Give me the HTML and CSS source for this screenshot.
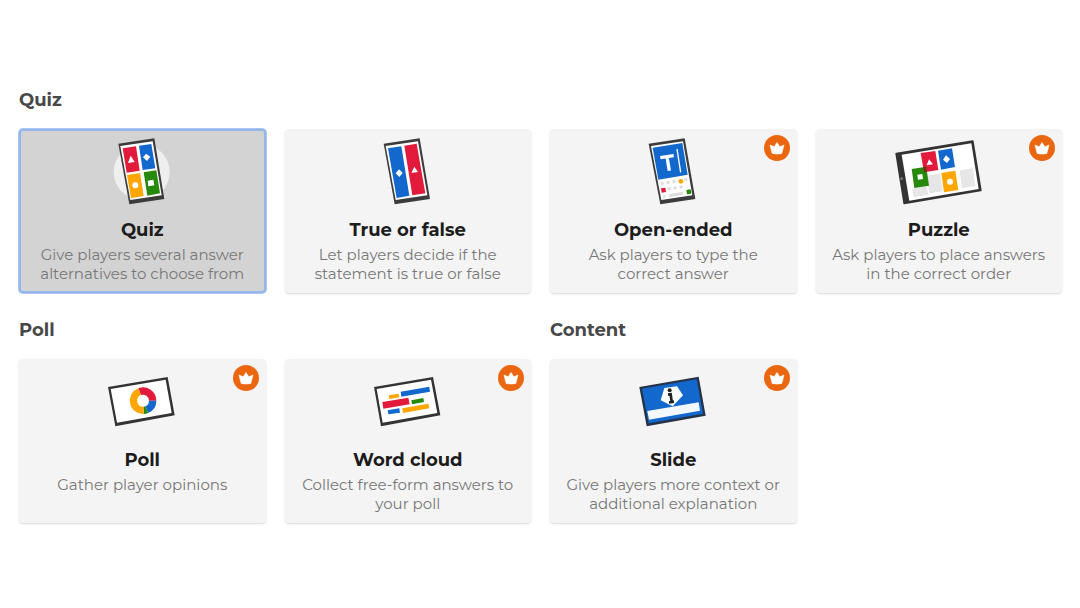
FILE: index.html
```html
<!DOCTYPE html>
<html lang="en">
<head>
<meta charset="utf-8">
<meta name="viewport" content="width=device-width, initial-scale=1">
<title>Question types</title>
<link rel="stylesheet" href="styles.css">
</head>
<body>
<svg class="defs" aria-hidden="true">
  <symbol id="crown" viewBox="0 0 26 26">
    <circle cx="13" cy="13" r="13" fill="#eb670f"/>
    <path fill="#fff" stroke="#fff" stroke-width=".6" stroke-linejoin="round" d="M6 10l4.200 1.800L13 7.500l2.800 4.300L20 10l-2.200 8.500q-4.800 1-9.600 0z"/>
  </symbol>
</svg>
<main class="picker">
  <section class="group group-wide">
    <h2 class="group-title">Quiz</h2>
    <div class="cards">
      <button class="card selected" type="button" aria-pressed="true">
        <svg class="art" viewBox="0 0 330 264" aria-hidden="true"><g transform="translate(39 3)">
          <circle cx="125" cy="126" r="84" fill="#efefef"/>
          <path fill="#3c3c3c" d="M55 41L163 25 193 207 88 223z"/>
          <path fill="#fff" d="M61 48L158 34 185 196 91 210z"/>
          <path fill="#e21b3c" d="M68 55L108 49 119 122 80 128z"/>
          <path fill="#1368ce" d="M117 47L154 42 166 115 128 120z"/>
          <path fill="#ffa602" d="M81 135L120 129 131 198 93 205z"/>
          <path fill="#26890c" d="M131 127L169 121 180 190 142 197z"/>
          <path fill="#fff" d="M92 77L104 96 84 99zM138 71L151 80 141 93 129 82zM143 152L160 149 163 166 145 169z"/>
          <circle cx="106" cy="166" r="9" fill="#fff"/>
        </g></svg>
        <span class="name">Quiz</span>
        <span class="desc">Give players several answer<br>alternatives to choose from</span>
      </button>
      <button class="card" type="button">
        <svg class="art" viewBox="0 0 330 264" aria-hidden="true"><g transform="translate(37 3)">
          <path fill="#3c3c3c" d="M55 41L163 25 194 207 88 223z"/>
          <path fill="#fff" d="M61 48L158 34 186 196 91 210z"/>
          <path fill="#1368ce" d="M68 55L108 49 132 197 94 204z"/>
          <path fill="#e21b3c" d="M117 47L154 41 180 190 141 196z"/>
          <path fill="#fff" d="M101 118L112 129 102 141 91 130zM147 110L158 126 138 129z"/>
        </g></svg>
        <span class="name">True or false</span>
        <span class="desc">Let players decide if the<br>statement is true or false</span>
      </button>
      <button class="card" type="button">
        <svg class="badge" role="img" aria-label="Premium"><use href="#crown"/></svg>
        <svg class="art" viewBox="0 0 330 264" aria-hidden="true"><g transform="translate(37 3)">
          <path fill="#3c3c3c" d="M55 41L163 25 195 207 90 223z"/>
          <path fill="#fff" d="M62 48L158 34 186 196 93 210z"/>
          <path fill="#1368ce" d="M67 53L156 39 172 134 84 149z"/>
          <path fill="none" stroke="#fff" stroke-width="10" d="M90 83L130 77M110 80L117 122"/>
          <path stroke="#fff" stroke-width="4" d="M140 57L151 127"/>
          <path fill="none" stroke="#ddd" stroke-width="9" stroke-dasharray="9 9" d="M91 161L176 147M112 177L166 169"/>
          <path stroke="#ddd" stroke-width="9" d="M98 200L105 199M116 197L158 190"/>
          <circle cx="152" cy="154" r="7" fill="#ffa602"/>
          <path fill="#e21b3c" d="M92 175L105 173 107 186 94 188z"/>
          <path fill="#26890c" d="M168 180L181 178 183 191 170 193z"/>
        </g></svg>
        <span class="name">Open-ended</span>
        <span class="desc">Ask players to type the<br>correct answer</span>
      </button>
      <button class="card" type="button">
        <svg class="badge" role="img" aria-label="Premium"><use href="#crown"/></svg>
        <svg class="art" viewBox="0 0 330 264" aria-hidden="true"><g transform="translate(5 3)">
          <path fill="#333" stroke="#333" stroke-width="6" stroke-linejoin="round" d="M32 71L261 34 285 181 56 220z"/>
          <path fill="#fff" d="M48 74L257 40 279 177 71 212z"/>
          <path fill="#e6e6e6" d="M123 137L163 130 171 184 131 190zM222 121L262 115 269 168 229 175zM80 176L122 169 129 194 84 202z"/>
          <path fill="#e21b3c" d="M105 69L149 63 158 120 115 127z"/>
          <path fill="#26890c" d="M78 117L122 110 130 167 86 174z"/>
          <path fill="#7b2b19" d="M112 111L122 110 124 125 115 127z"/>
          <path fill="#1368ce" d="M157 62L199 55 208 111 166 119z"/>
          <path fill="#ffa602" d="M167 129L209 122 218 180 175 187z"/>
          <path fill="#fff" d="M130 88L142 103 123 106zM181 76L193 87 184 99 172 89zM95 134L110 132 112 147 97 149z"/>
          <circle cx="193" cy="155" r="9" fill="#fff"/>
          <circle cx="48" cy="146" r="4" fill="#777"/>
        </g></svg>
        <span class="name">Puzzle</span>
        <span class="desc">Ask players to place answers<br>in the correct order</span>
      </button>
    </div>
  </section>
  <section class="group">
    <h2 class="group-title">Poll</h2>
    <div class="cards">
      <button class="card" type="button">
        <svg class="badge" role="img" aria-label="Premium"><use href="#crown"/></svg>
        <svg class="art" viewBox="0 0 330 264" aria-hidden="true"><g transform="translate(24 18)">
          <path fill="#333" d="M39 66L218 36 239 151 61 184z"/>
          <path fill="#fff" d="M47 72L212 44 230 144 66 173z"/>
          <g fill="none" stroke-width="22">
            <path stroke="#e21b3c" d="M134 80A29 29 0 0 1 173 107"/>
            <path stroke="#1368ce" d="M173 107A29 29 0 0 1 155 134"/>
            <path stroke="#26890c" d="M155 134A29 29 0 0 1 146 136"/>
            <path stroke="#ffa602" d="M146 136A29 29 0 0 1 134 80"/>
          </g>
        </g></svg>
        <span class="name">Poll</span>
        <span class="desc">Gather player opinions</span>
      </button>
      <button class="card" type="button">
        <svg class="badge" role="img" aria-label="Premium"><use href="#crown"/></svg>
        <svg class="art" viewBox="0 0 330 264" aria-hidden="true"><g transform="translate(22 18)">
          <path fill="#333" d="M41 66L218 36 240 151 62 184z"/>
          <path fill="#fff" d="M49 72L212 44 231 144 67 173z"/>
          <path fill="#1368ce" d="M121 80L207 65 209 80 123 95zM82 136L117 130 119 143 84 148z"/>
          <path fill="#ffa602" d="M85 91L115 86 117 97 87 102zM126 130L204 116 207 130 128 144z"/>
          <path fill="#e21b3c" d="M66 111L144 98 148 118 69 131z"/>
          <path fill="#26890c" d="M153 106L189 99 191 111 155 118z"/>
        </g></svg>
        <span class="name">Word cloud</span>
        <span class="desc">Collect free-form answers to<br>your poll</span>
      </button>
    </div>
  </section>
  <section class="group">
    <h2 class="group-title">Content</h2>
    <div class="cards">
      <button class="card" type="button">
        <svg class="badge" role="img" aria-label="Premium"><use href="#crown"/></svg>
        <svg class="art" viewBox="0 0 330 264" aria-hidden="true"><g transform="translate(30 18)">
          <path fill="#263248" d="M34 66L212 35 233 152 56 184z"/>
          <path fill="#1368ce" d="M42 71L206 43 225 146 62 175z"/>
          <path fill="#f4f8ff" d="M58 138L212 112 216 137 63 164z"/>
          <path fill="#fff" d="M109 69L147 64 165 91 134 124 98 106z"/>
          <circle cx="125" cy="76" r="6" fill="#222"/>
          <path fill="none" stroke="#222" stroke-width="8" d="M120 89L128 88 131 111M123 112L138 110"/>
        </g></svg>
        <span class="name">Slide</span>
        <span class="desc">Give players more context or<br>additional explanation</span>
      </button>
    </div>
  </section>
</main>
</body>
</html>
```
FILE: styles.css
```css
* { box-sizing: border-box; }
body {
  margin: 0;
  background: #fff;
  color: #222;
  font-family: Montserrat, Inter, "Liberation Sans", sans-serif;
}
.defs { display: none; }
.picker {
  display: grid;
  grid-template-columns: repeat(2, minmax(0, 1fr));
  gap: 25px 19px;
  padding: 88px 18px 24px 19px;
}
.group-wide { grid-column: 1 / -1; }
.group-title {
  margin: 0 0 17px;
  font-size: 18px;
  line-height: 24px;
  font-weight: 700;
  color: #484848;
}
.cards {
  display: grid;
  grid-template-columns: repeat(2, minmax(0, 1fr));
  gap: 19px;
}
.group-wide .cards { grid-template-columns: repeat(4, minmax(0, 1fr)); }
.card {
  position: relative;
  display: flex;
  flex-direction: column;
  align-items: center;
  justify-content: flex-start;
  min-height: 164px;
  padding: 0 0 10px;
  border: 0;
  border-radius: 4px;
  background: #f4f4f4;
  box-shadow: 0 1px 2px #00000026;
  color: #1c1c1c;
  font-family: inherit;
  text-align: center;
  cursor: pointer;
}
.card.selected {
  background: #d3d3d3;
  box-shadow: inset 0 0 0 2px #94b6ea, 0 0 0 1px #a9c5ee;
}
.art { width: 110px; height: 88px; }
.badge {
  position: absolute;
  top: 6px;
  right: 7px;
  width: 26px;
  height: 26px;
}
.name {
  font-size: 18px;
  line-height: 26px;
  font-weight: 700;
}
.desc {
  margin-top: 2px;
  font-size: 15px;
  line-height: 19px;
  color: #777;
}
```
